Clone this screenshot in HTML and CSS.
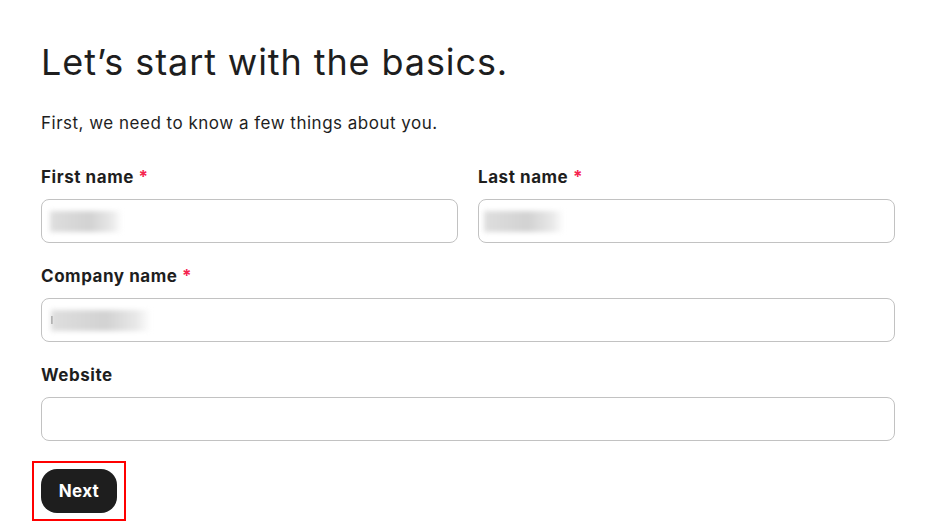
FILE: index.html
```html
<!DOCTYPE html>
<html lang="en">
<head>
<meta charset="utf-8">
<title>Let's start with the basics</title>
<link rel="stylesheet" href="styles.css">
</head>
<body>
<main class="page">
  <h1 class="title">Let’s start with the basics.</h1>
  <p class="intro">First, we need to know a few things about you.</p>
  <form class="form">
    <div class="row two">
      <div class="field">
        <label class="label">First name <span class="req">*</span></label>
        <div class="input"><span class="blur blur-first"></span></div>
      </div>
      <div class="field">
        <label class="label">Last name <span class="req">*</span></label>
        <div class="input"><span class="blur blur-last"></span></div>
      </div>
    </div>
    <div class="row">
      <div class="field">
        <label class="label">Company name <span class="req">*</span></label>
        <div class="input"><span class="caret"></span><span class="blur blur-company"></span></div>
      </div>
    </div>
    <div class="row">
      <div class="field">
        <label class="label">Website</label>
        <div class="input"></div>
      </div>
    </div>
    <div class="actions">
      <div class="highlight"><button type="button" class="btn">Next</button></div>
    </div>
  </form>
</main>
</body>
</html>
```
FILE: styles.css
```css
* { box-sizing: border-box; }
html, body { margin: 0; padding: 0; background: #fff; }
body {
  font-family: Inter, "Noto Sans", sans-serif;
  color: #1e1e1e;
}
.page {
  padding: 0 40px 0 41px;
}
.title {
  margin: 0;
  padding-top: 40px;
  font-size: 36px;
  font-weight: 400;
  line-height: 44px;
  letter-spacing: 0.9px;
}
.intro {
  margin: 0;
  padding-top: 27px;
  font-size: 17px;
  line-height: 24px;
  letter-spacing: 0.5px;
}
.form {
  display: flex;
  flex-direction: column;
  gap: 21px;
  padding-top: 30px;
}
.row { display: flex; gap: 20px; }
.field { flex: 1; display: flex; flex-direction: column; gap: 10px; }
.label {
  font-size: 17px;
  font-weight: 700;
  line-height: 24px;
  letter-spacing: 0.55px;
}
.req { color: #f5254f; }
.input {
  height: 44px;
  border: 1px solid #c2c2c2;
  border-radius: 8px;
  display: flex;
  align-items: center;
  padding-left: 8px;
}
.blur {
  display: block;
  height: 21px;
  background: linear-gradient(90deg, #dedede 0%, #d2d2d2 55%, #e8e8e8 85%, #fff 100%);
  filter: blur(2.5px);
}
.blur-first { width: 72px; }
.blur-last { width: 80px; margin-left: -3px; }
.caret {
  display: block;
  width: 2px;
  height: 8px;
  background: #777;
  margin-left: 1px;
  margin-right: -2px;
  filter: blur(0.6px);
}
.blur-company { width: 100px; }
.actions { display: flex; margin-top: -1px; margin-left: -9px; }
.highlight {
  border: 2px solid #ff0000;
  padding: 6px 7px 6px 7px;
}
.btn {
  display: block;
  width: 76px;
  height: 44px;
  border: 0;
  border-radius: 16px;
  background: #1e1e1e;
  color: #fff;
  font-family: Inter, "Noto Sans", sans-serif;
  font-size: 17px;
  font-weight: 700;
  letter-spacing: 0.3px;
  cursor: pointer;
}
```
